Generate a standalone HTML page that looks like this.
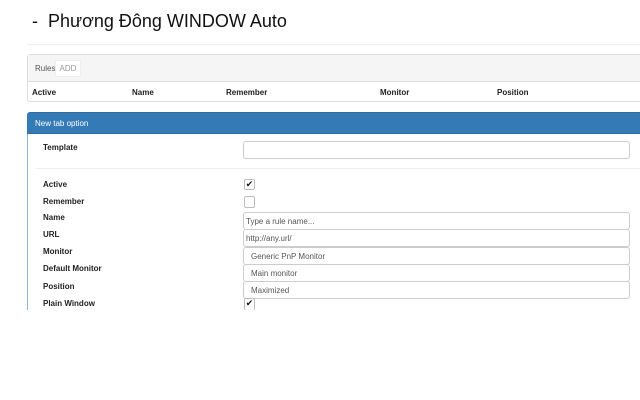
<!DOCTYPE html>
<html><head><meta charset="utf-8"><style>
*{box-sizing:border-box;margin:0;padding:0}
body{width:640px;height:400px;overflow:hidden;background:#fff;font-family:"Liberation Sans",Arial,sans-serif;color:#333;position:relative}
.a{position:absolute}
.b{font-weight:bold;font-size:8px;color:#222}
.in{position:absolute;left:243px;width:387px;border:1px solid #ccc;border-radius:3px;font-size:8px;color:#555;padding-left:2px;display:flex;align-items:center;background:#fff}
.cb{position:absolute;left:244px;width:11px;height:11px;border:1px solid #bbb;border-radius:2px;font-size:9px;line-height:9px;text-align:center;color:#111;background:#fff}
</style></head><body>
<div class="a" style="left:32px;top:11px;font-size:18px;color:#111">-&nbsp; Phương Đông WINDOW Auto</div>
<div class="a" style="left:27px;top:44px;width:613px;height:1px;background:#eee"></div>
<div class="a" style="left:27px;top:54px;width:620px;height:48px;border:1px solid #ddd;border-radius:3px;background:#fff"></div>
<div class="a" style="left:28px;top:55px;width:612px;height:27px;background:#f5f5f5;border-bottom:1px solid #ddd"></div>
<div class="a" style="left:35px;top:64px;font-size:8px;color:#555">Rules</div>
<div class="a" style="left:55px;top:60px;width:26px;height:17px;background:#fff;border:1px solid #eee;font-size:8px;color:#999;line-height:15px;text-align:center">ADD</div>
<div class="a b" style="left:32px;top:88px">Active</div>
<div class="a b" style="left:132px;top:88px">Name</div>
<div class="a b" style="left:226px;top:88px">Remember</div>
<div class="a b" style="left:380px;top:88px">Monitor</div>
<div class="a b" style="left:497px;top:88px">Position</div>
<div class="a" style="left:27px;top:112px;width:620px;height:22px;background:#337ab7;border-top:1px solid #2e6da4;border-bottom:1px solid #2e6da4;border-radius:3px 0 0 0"></div>
<div class="a" style="left:35px;top:119px;font-size:8px;color:#fff">New tab option</div>
<div class="a" style="left:27px;top:134px;width:1px;height:176px;background:#8fb3d6"></div>
<div class="a b" style="left:43px;top:143px">Template</div>
<div class="in" style="top:141px;height:18px"></div>
<div class="a" style="left:36px;top:168px;width:604px;height:1px;background:#eee"></div>
<div class="a b" style="left:43px;top:180px">Active</div>
<div class="cb" style="top:179px">✔</div>
<div class="a b" style="left:43px;top:197px">Remember</div>
<div class="cb" style="top:196px;height:12px"></div>
<div class="a b" style="left:43px;top:213px">Name</div>
<div class="in" style="top:212px;height:18px">Type a rule name...</div>
<div class="a b" style="left:43px;top:230px">URL</div>
<div class="in" style="top:229px;height:18px">http://any.url/</div>
<div class="a b" style="left:43px;top:247px">Monitor</div>
<div class="in" style="top:247px;height:18px;padding-left:7px">Generic PnP Monitor</div>
<div class="a b" style="left:43px;top:264px">Default Monitor</div>
<div class="in" style="top:264px;height:18px;padding-left:7px">Main monitor</div>
<div class="a b" style="left:43px;top:282px">Position</div>
<div class="in" style="top:281px;height:18px;padding-left:7px">Maximized</div>
<div class="a b" style="left:43px;top:299px">Plain Window</div>
<div class="cb" style="top:298px;height:12px;border-bottom:none">✔</div>
<div class="a" style="left:0;top:310px;width:640px;height:90px;background:#fff"></div>
</body></html>
